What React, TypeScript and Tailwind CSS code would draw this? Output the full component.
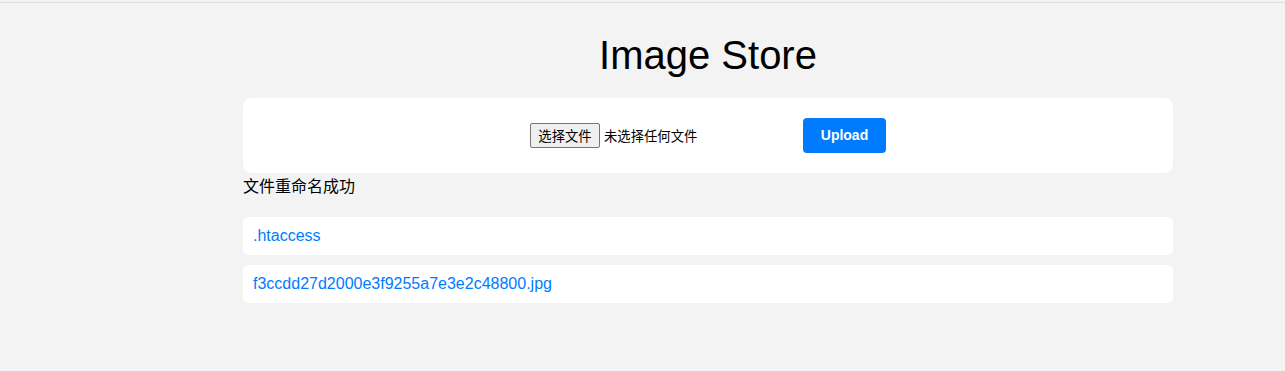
import React from 'react';

const files = ['.htaccess', 'f3ccdd27d2000e3f9255a7e3e2c48800.jpg'];

const App = () => {
    return (
        <div className="min-h-screen bg-[#f3f3f3] pt-[2px] font-['Liberation_Sans','Noto_Sans_CJK_SC',sans-serif]">
            <div className="border-t border-[#dedede] min-h-[369px]">
                <div className="ml-[243px] w-[930px]">
                    <h1 className="mt-[29px] mb-[20px] text-center text-[40px] leading-[46px] text-black">Image Store</h1>

                    {/* upload form */}
                    <div className="bg-white rounded-lg p-5 flex items-center justify-center gap-5">
                        <div className="w-[253px] flex items-center text-[13.33px] text-black">
                            <span className="w-[70px] h-[25px] flex items-center justify-center border border-[#767676] rounded-[2px] bg-[#efefef] font-['Noto_Sans_CJK_SC',sans-serif]">选择文件</span>
                            <span className="ml-[4px] font-['Noto_Sans_CJK_SC',sans-serif]">未选择任何文件</span>
                        </div>
                        <button className="w-[83px] h-[35px] rounded bg-[#007bff] text-white text-[14px] font-bold">Upload</button>
                    </div>

                    <p className="text-[16px] leading-[24px] text-black font-['Noto_Sans_CJK_SC',sans-serif]">文件重命名成功</p>

                    <ul className="mt-[20px] flex flex-col gap-[10px]">
                        {files.map((f) => (
                            <li key={f} className="bg-white rounded-[5px] px-[10px] py-[10px] leading-[18px] text-[16px]">
                                <a href="#" className="text-[#007bff]">{f}</a>
                            </li>
                        ))}
                    </ul>
                </div>
            </div>
        </div>
    );
};

export default App;
